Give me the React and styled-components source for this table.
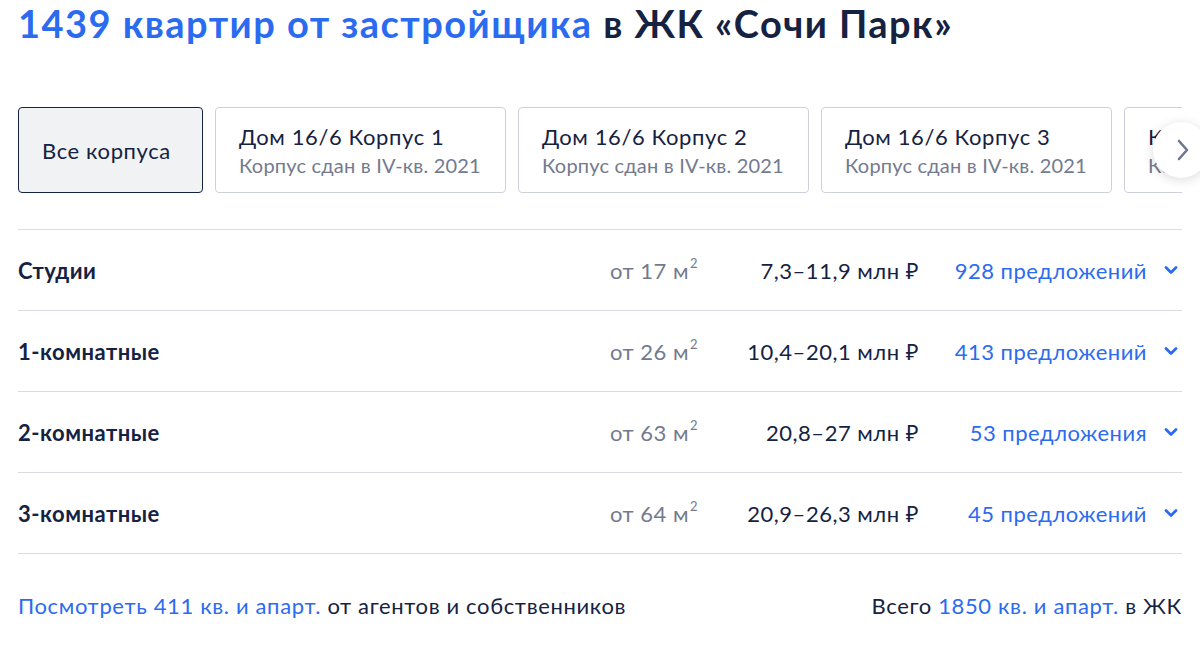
import React from "react";
import styled, { createGlobalStyle } from "styled-components";

const Global = createGlobalStyle`
  html, body { margin: 0; padding: 0; background: #fff; }
  body { font-family: Lato, "Noto Sans", sans-serif; color: #152242; }
  * { box-sizing: border-box; }
`;

const Page = styled.div`
  width: 1200px;
  height: 649px;
  overflow: hidden;
  padding: 0 18px;
`;

const Title = styled.h1`
  margin: 0;
  padding-top: 0;
  font-size: 38px;
  line-height: 46px;
  font-weight: 700;
  color: #152242;
  letter-spacing: 1.45px;
`;

const Blue = styled.span`
  color: #2b6bf0;
`;

const TabsWrap = styled.div`
  position: relative;
  margin-top: 61px;
  width: 1164px;
`;

const TabsStrip = styled.div`
  display: flex;
  gap: 12px;
  overflow: hidden;
`;

const Tab = styled.div`
  flex: none;
  height: 86px;
  border-radius: 4px;
  border: 1px solid ${(p) => (p.$active ? "#152242" : "#ced1d9")};
  background: ${(p) => (p.$active ? "#f1f2f4" : "#fff")};
  display: flex;
  flex-direction: column;
  justify-content: center;
  padding: 0 23px;
  width: ${(p) => p.$w}px;
`;

const TabTitle = styled.div`
  font-size: 22px;
  line-height: 29px;
  letter-spacing: 0.6px;
  color: #152242;
  white-space: nowrap;
`;

const TabSub = styled.div`
  font-size: 20px;
  line-height: 28px;
  letter-spacing: 0.2px;
  color: #737a8e;
  white-space: nowrap;
`;

const NextBtn = styled.button`
  position: absolute;
  right: -27px;
  top: 15px;
  width: 56px;
  height: 56px;
  border-radius: 50%;
  border: none;
  background: #fff;
  box-shadow: 0 2px 12px rgba(0, 0, 0, 0.14);
  display: flex;
  align-items: center;
  justify-content: flex-start;
  padding-left: 24px;
  cursor: pointer;
`;

const Table = styled.div`
  margin-top: 36px;
  border-top: 1px solid #d9dbe1;
`;

const Row = styled.div`
  display: grid;
  grid-template-columns: 1fr 87px 222px 228px 35px;
  align-items: center;
  height: 81px;
  border-bottom: 1px solid #d9dbe1;
  font-size: 22px;
  letter-spacing: 0.5px;
`;

const Label = styled.div`
  font-weight: 700;
  color: #152242;
`;

const Area = styled.div`
  color: #737a8e;
  white-space: nowrap;
  sup {
    font-size: 13px;
    position: relative;
    top: -2px;
    margin-left: 1px;
  }
`;

const Price = styled.div`
  text-align: right;
  color: #152242;
  white-space: nowrap;
`;

const Offers = styled.div`
  text-align: right;
  color: #2b6bf0;
  white-space: nowrap;
`;

const Chevron = styled.div`
  display: flex;
  justify-content: flex-end;
  padding-right: 4px;
`;

const Footer = styled.div`
  display: flex;
  justify-content: space-between;
  align-items: center;
  height: 102px;
  font-size: 22px;
  letter-spacing: 0.65px;
  color: #152242;
`;

const tabs = [
  { t: "Дом 16/6 Корпус 1", s: "Корпус сдан в IV-кв. 2021" },
  { t: "Дом 16/6 Корпус 2", s: "Корпус сдан в IV-кв. 2021" },
  { t: "Дом 16/6 Корпус 3", s: "Корпус сдан в IV-кв. 2021" },
  { t: "Корпус 4", s: "Корпус сдан" },
];

const rows = [
  ["Студии", "17", "7,3–11,9 млн ₽", "928 предложений"],
  ["1-комнатные", "26", "10,4–20,1 млн ₽", "413 предложений"],
  ["2-комнатные", "63", "20,8–27 млн ₽", "53 предложения"],
  ["3-комнатные", "64", "20,9–26,3 млн ₽", "45 предложений"],
];

export default function App() {
  return (
    <Page>
      <Global />
      <Title>
        <Blue>1439 квартир от застройщика</Blue> в ЖК «Сочи Парк»
      </Title>
      <TabsWrap>
        <TabsStrip>
          <Tab $active $w={185}>
            <TabTitle>Все корпуса</TabTitle>
          </Tab>
          {tabs.map((x, i) => (
            <Tab key={i} $w={291}>
              <TabTitle>{x.t}</TabTitle>
              <TabSub>{x.s}</TabSub>
            </Tab>
          ))}
        </TabsStrip>
        <NextBtn aria-label="next">
          <svg width="12" height="22" viewBox="0 0 12 22" fill="none">
            <path d="M2 2l8 9-8 9" stroke="#6e7690" strokeWidth="2.6" strokeLinecap="round" strokeLinejoin="round" />
          </svg>
        </NextBtn>
      </TabsWrap>
      <Table>
        {rows.map((r) => (
          <Row key={r[0]}>
            <Label>{r[0]}</Label>
            <Area>
              от {r[1]} м<sup>2</sup>
            </Area>
            <Price>{r[2]}</Price>
            <Offers>{r[3]}</Offers>
            <Chevron>
              <svg width="14" height="10" viewBox="0 0 14 10" fill="none">
                <path d="M2 2.5l5 5 5-5" stroke="#2b6bf0" strokeWidth="2.8" strokeLinecap="round" strokeLinejoin="round" />
              </svg>
            </Chevron>
          </Row>
        ))}
      </Table>
      <Footer>
        <div>
          <Blue>Посмотреть 411 кв. и апарт.</Blue> от агентов и собственников
        </div>
        <div>
          Всего <Blue>1850 кв. и апарт.</Blue> в ЖК
        </div>
      </Footer>
    </Page>
  );
}
